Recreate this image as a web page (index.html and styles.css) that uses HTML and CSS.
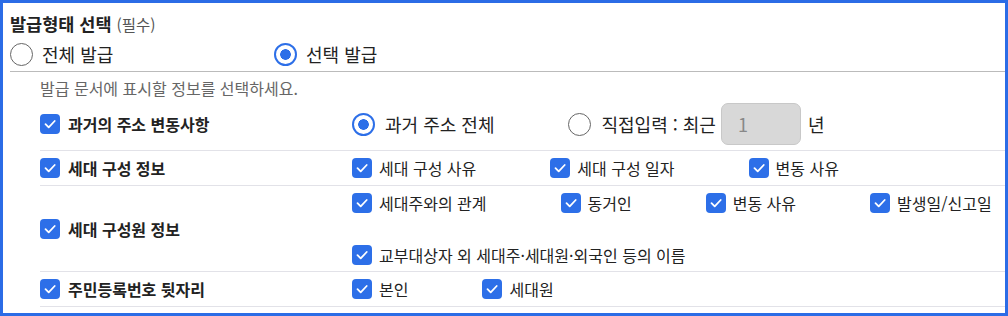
FILE: index.html
```html
<!DOCTYPE html>
<html lang="ko">
<head>
    <meta charset="UTF-8">
    <meta name="viewport" content="width=device-width, initial-scale=1.0">
    <title>발급형태 선택</title>
    <link rel="stylesheet" href="styles.css">
</head>
<body>
    <div class="panel">
        <div class="title">발급형태 선택 <span class="req">(필수)</span></div>

        <div class="type-row">
            <label class="type-opt first"><span class="radio"></span>전체 발급</label>
            <label class="type-opt"><span class="radio on"></span>선택 발급</label>
        </div>

        <div class="options">
            <p class="hint">발급 문서에 표시할 정보를 선택하세요.</p>

            <div class="row tall">
                <div class="row-label"><span class="chk"><svg viewBox="0 0 20 20"><path d="M5.5 10.2l3.2 3.2 6-6.4"/></svg></span>과거의 주소 변동사항</div>
                <div class="items">
                    <label class="item big"><span class="radio on"></span>과거 주소 전체</label>
                    <label class="item big"><span class="radio"></span>직접입력 : 최근<span class="year-box">1</span>년</label>
                </div>
            </div>

            <div class="row">
                <div class="row-label"><span class="chk"><svg viewBox="0 0 20 20"><path d="M5.5 10.2l3.2 3.2 6-6.4"/></svg></span>세대 구성 정보</div>
                <div class="items">
                    <label class="item"><span class="chk"><svg viewBox="0 0 20 20"><path d="M5.5 10.2l3.2 3.2 6-6.4"/></svg></span>세대 구성 사유</label>
                    <label class="item"><span class="chk"><svg viewBox="0 0 20 20"><path d="M5.5 10.2l3.2 3.2 6-6.4"/></svg></span>세대 구성 일자</label>
                    <label class="item"><span class="chk"><svg viewBox="0 0 20 20"><path d="M5.5 10.2l3.2 3.2 6-6.4"/></svg></span>변동 사유</label>
                </div>
            </div>

            <div class="row multi">
                <div class="row-label"><span class="chk"><svg viewBox="0 0 20 20"><path d="M5.5 10.2l3.2 3.2 6-6.4"/></svg></span>세대 구성원 정보</div>
                <div class="item-lines">
                    <div class="items">
                        <label class="item"><span class="chk"><svg viewBox="0 0 20 20"><path d="M5.5 10.2l3.2 3.2 6-6.4"/></svg></span>세대주와의 관계</label>
                        <label class="item"><span class="chk"><svg viewBox="0 0 20 20"><path d="M5.5 10.2l3.2 3.2 6-6.4"/></svg></span>동거인</label>
                        <label class="item"><span class="chk"><svg viewBox="0 0 20 20"><path d="M5.5 10.2l3.2 3.2 6-6.4"/></svg></span>변동 사유</label>
                        <label class="item"><span class="chk"><svg viewBox="0 0 20 20"><path d="M5.5 10.2l3.2 3.2 6-6.4"/></svg></span>발생일/신고일</label>
                    </div>
                    <div class="items">
                        <label class="item"><span class="chk"><svg viewBox="0 0 20 20"><path d="M5.5 10.2l3.2 3.2 6-6.4"/></svg></span>교부대상자 외 세대주·세대원·외국인 등의 이름</label>
                    </div>
                </div>
            </div>

            <div class="row">
                <div class="row-label"><span class="chk"><svg viewBox="0 0 20 20"><path d="M5.5 10.2l3.2 3.2 6-6.4"/></svg></span>주민등록번호 뒷자리</div>
                <div class="items">
                    <label class="item"><span class="chk"><svg viewBox="0 0 20 20"><path d="M5.5 10.2l3.2 3.2 6-6.4"/></svg></span>본인</label>
                    <label class="item"><span class="chk"><svg viewBox="0 0 20 20"><path d="M5.5 10.2l3.2 3.2 6-6.4"/></svg></span>세대원</label>
                </div>
            </div>
        </div>
    </div>
</body>
</html>
```

FILE: styles.css
```css
* {
    box-sizing: border-box;
}

body {
    margin: 0;
    font-family: "Noto Sans CJK KR", "Noto Sans", sans-serif;
    color: #222;
    background-color: #fff;
}

.panel {
    width: 1008px;
    height: 316px;
    border: 3px solid #2b6ce6;
    padding-left: 7px;
    overflow: hidden;
}

.title {
    padding-top: 8px;
    height: 34px;
    line-height: 26px;
    font-size: 17.5px;
    font-weight: bold;
}

.req {
    font-size: 15.5px;
    font-weight: normal;
    color: #555;
}

.type-row {
    display: flex;
    align-items: center;
    height: 35px;
    border-bottom: 1px solid #bbb;
    font-size: 18px;
}

.type-opt {
    display: flex;
    align-items: center;
    gap: 9px;
}

.type-opt.first {
    width: 264px;
}

.radio {
    width: 23px;
    height: 23px;
    border: 1.5px solid #666;
    border-radius: 50%;
    background-color: #fff;
    flex-shrink: 0;
}

.radio.on {
    border: 2px solid #2d6fe8;
    background: radial-gradient(circle, #2d6fe8 0, #2d6fe8 5px, #fff 5.6px);
}

.options {
    padding-left: 30px;
}

.hint {
    margin: 0;
    padding-top: 6px;
    line-height: 20px;
    height: 26px;
    font-size: 16px;
    color: #666;
}

.row {
    display: flex;
    align-items: center;
    min-height: 35px;
    border-bottom: 1px solid #e2e2e8;
}

.row.tall {
    height: 53px;
}

.row.multi {
    height: 86px;
}

.row-label {
    width: 312px;
    display: flex;
    align-items: center;
    gap: 8px;
    font-size: 16px;
    font-weight: bold;
    flex-shrink: 0;
}

.items {
    display: flex;
    align-items: center;
    gap: 74px;
}

.item-lines {
    display: flex;
    flex-direction: column;
    gap: 28px;
}

.item {
    display: flex;
    align-items: center;
    gap: 7px;
    font-size: 16px;
    white-space: nowrap;
}

.item.big {
    font-size: 18px;
    gap: 10px;
}

.chk {
    width: 20px;
    height: 20px;
    border-radius: 4px;
    background-color: #2d6fe8;
    flex-shrink: 0;
}

.chk svg {
    display: block;
    width: 20px;
    height: 20px;
    fill: none;
    stroke: #fff;
    stroke-width: 1.8;
    stroke-linecap: round;
    stroke-linejoin: round;
}

.year-box {
    display: inline-block;
    width: 80px;
    height: 42px;
    margin: 0 -3px 0 -5px;
    padding-left: 16px;
    line-height: 40px;
    border: 1px solid #c8c8c8;
    border-radius: 7px;
    background-color: #d8d8d8;
    color: #888;
}
```
